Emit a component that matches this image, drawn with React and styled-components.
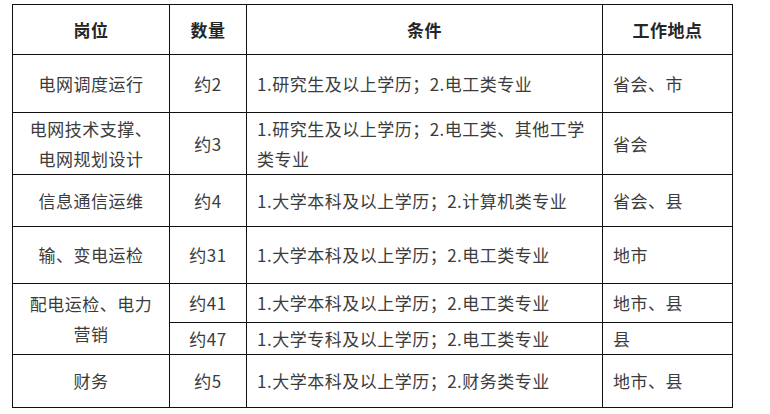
import React from 'react';
import styled, { createGlobalStyle } from 'styled-components';

const GlobalStyle = createGlobalStyle`
    html, body {
        margin: 0;
        padding: 0;
        background: #fff;
    }
    body {
        font-family: "Noto Sans CJK SC", "Noto Sans", sans-serif;
    }
`;

const Page = styled.div`
    padding: 4px 0 0 12px;
`;

const Table = styled.table`
    width: 720px;
    table-layout: fixed;
    border-collapse: collapse;
    font-size: 17px;
    letter-spacing: 0.5px;
    color: #3c3c3c;
`;

const Row = styled.tr`
    height: ${ ({ $h }) => $h }px;
`;

const HeadCell = styled.th`
    border: 1px solid #111;
    font-weight: bold;
    color: #262626;
    text-align: center;
    vertical-align: middle;
    padding: 0;
`;

const Cell = styled.td`
    border: 1px solid #111;
    text-align: ${ ({ $left }) => $left ? 'left' : 'center' };
    padding: ${ ({ $left }) => $left ? '0 6px 0 10px' : '0' };
    vertical-align: middle;
    line-height: 30px;
    white-space: nowrap;
`;

const rows = [
    { h: 58, post: '电网调度运行', num: '约2', cond: '1.研究生及以上学历；2.电工类专业', place: '省会、市' },
    { h: 62, post: ['电网技术支撑、', '电网规划设计'], num: '约3', cond: ['1.研究生及以上学历；2.电工类、其他工学', '类专业'], place: '省会' },
    { h: 52, post: '信息通信运维', num: '约4', cond: '1.大学本科及以上学历；2.计算机类专业', place: '省会、县' },
    { h: 57, post: '输、变电运检', num: '约31', cond: '1.大学本科及以上学历；2.电工类专业', place: '地市' },
];

const lines = (text) => Array.isArray(text)
    ? text.map((t, i) => <React.Fragment key={ i }>{ i > 0 && <br/> }{ t }</React.Fragment>)
    : text;

const App = () => (
    <Page>
        <GlobalStyle/>
        <Table>
            <colgroup>
                <col style={ { width: 157 } }/>
                <col style={ { width: 77 } }/>
                <col style={ { width: 356 } }/>
                <col style={ { width: 130 } }/>
            </colgroup>
            <thead>
                <Row $h={ 50 }>
                    <HeadCell>岗位</HeadCell>
                    <HeadCell>数量</HeadCell>
                    <HeadCell>条件</HeadCell>
                    <HeadCell>工作地点</HeadCell>
                </Row>
            </thead>
            <tbody>
                { rows.map((r, i) => (
                    <Row key={ i } $h={ r.h }>
                        <Cell>{ lines(r.post) }</Cell>
                        <Cell>{ r.num }</Cell>
                        <Cell $left>{ lines(r.cond) }</Cell>
                        <Cell $left>{ r.place }</Cell>
                    </Row>
                )) }
                <Row $h={ 39 }>
                    <Cell rowSpan={ 2 }>{ lines(['配电运检、电力', '营销']) }</Cell>
                    <Cell>约41</Cell>
                    <Cell $left>1.大学本科及以上学历；2.电工类专业</Cell>
                    <Cell $left>地市、县</Cell>
                </Row>
                <Row $h={ 32 }>
                    <Cell>约47</Cell>
                    <Cell $left>1.大学专科及以上学历；2.电工类专业</Cell>
                    <Cell $left>县</Cell>
                </Row>
                <Row $h={ 53 }>
                    <Cell>财务</Cell>
                    <Cell>约5</Cell>
                    <Cell $left>1.大学本科及以上学历；2.财务类专业</Cell>
                    <Cell $left>地市、县</Cell>
                </Row>
            </tbody>
        </Table>
    </Page>
);

export default App;
